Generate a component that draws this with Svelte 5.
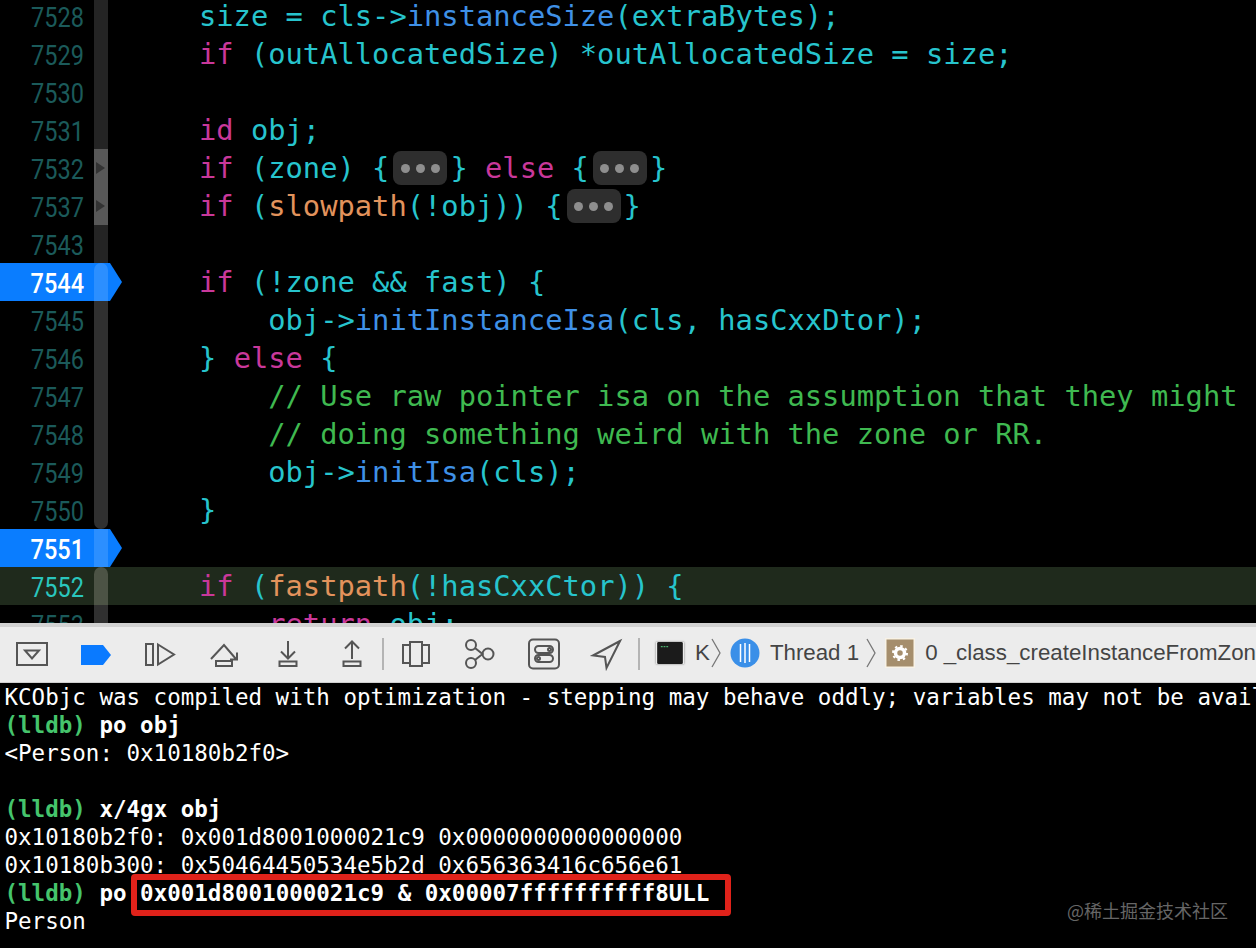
<script>
  const rows = [
    { n: 7528, stripe: 'dim', code: [['p', 'size = cls->'], ['m', 'instanceSize'], ['p', '(extraBytes);']] },
    { n: 7529, stripe: 'dim', code: [['k', 'if'], ['p', ' (outAllocatedSize) *outAllocatedSize = size;']] },
    { n: 7530, stripe: 'dim', code: [] },
    { n: 7531, stripe: 'dim', code: [['k', 'id'], ['p', ' obj;']] },
    { n: 7532, fold: 'open', code: [['k', 'if'], ['p', ' (zone) {'], ['dots', ''], ['p', '}'], ['k', ' else'], ['p', ' {'], ['dots', ''], ['p', '}']] },
    { n: 7537, fold: 'open', code: [['k', 'if'], ['p', ' ('], ['o', 'slowpath'], ['p', '(!obj)) {'], ['dots', ''], ['p', '}']] },
    { n: 7543, stripe: 'dim', code: [] },
    { n: 7544, bp: true, stripe: 'start', code: [['k', 'if'], ['p', ' (!zone && fast) {']] },
    { n: 7545, code: [['p', '    obj->'], ['m', 'initInstanceIsa'], ['p', '(cls, hasCxxDtor);']] },
    { n: 7546, code: [['p', '} '], ['k', 'else'], ['p', ' {']] },
    { n: 7547, code: [['c', '    // Use raw pointer isa on the assumption that they might']] },
    { n: 7548, code: [['c', '    // doing something weird with the zone or RR.']] },
    { n: 7549, code: [['p', '    obj->'], ['m', 'initIsa'], ['p', '(cls);']] },
    { n: 7550, stripe: 'end', code: [['p', '}']] },
    { n: 7551, bp: true, stripe: 'none', code: [] },
    { n: 7552, cur: true, stripe: 'start', code: [['k', 'if'], ['p', ' ('], ['o', 'fastpath'], ['p', '(!hasCxxCtor)) {']] },
    { n: 7553, code: [['k', '    return'], ['p', ' obj;']] }
  ];
</script>

<div class="app">
  <section class="editor">
    <div class="lines">
      {#each rows as r}
        <div class="row" class:cur={r.cur} class:bp={r.bp}>
          {#if r.bp}<span class="flag"></span>{/if}
          <span class="num">{r.n}</span>
          <span class="stripe {r.stripe ?? ''}" class:open={r.fold}>
            {#if r.fold}<i class="tri"></i>{/if}
          </span>
          <span class="code">{#each r.code as [c, t]}{#if c === 'dots'}<span class="pill"><b></b><b></b><b></b></span>{:else}<span class={c}>{t}</span>{/if}{/each}</span>
        </div>
      {/each}
    </div>
  </section>

  <nav class="toolbar">
    <div class="slot">
      <svg viewBox="0 0 40 40"><rect x="5" y="8" width="30" height="22"/><path d="M13 15.500H27L20 23.500Z"/></svg>
    </div>
    <div class="slot">
      <svg viewBox="0 0 40 40"><path class="blue" d="M5 10H27L35 20L27 30H5Z"/></svg>
    </div>
    <div class="slot">
      <svg viewBox="0 0 40 40"><rect x="6" y="9" width="7" height="21"/><path d="M18 9.500L34 19.500L18 29.500Z"/></svg>
    </div>
    <div class="slot">
      <svg viewBox="0 0 40 40"><path d="M7 24L20 10L32 24M33 17.500V24.500H26"/><rect x="12" y="26" width="16" height="5"/></svg>
    </div>
    <div class="slot">
      <svg viewBox="0 0 40 40"><path d="M20 6V23M13 16.500L20 23.500L27 16.500"/><rect x="11.500" y="26.500" width="17" height="4.500"/></svg>
    </div>
    <div class="slot sep">
      <svg viewBox="0 0 40 40"><path d="M20 7V24M13 13.500L20 6.500L27 13.500"/><rect x="11.500" y="26.500" width="17" height="4.500"/></svg>
    </div>
    <div class="slot">
      <svg viewBox="0 0 40 40"><rect x="14" y="7" width="12" height="24"/><path d="M14 10H7V28H14M26 10H33V28H26"/></svg>
    </div>
    <div class="slot">
      <svg viewBox="0 0 40 40"><circle cx="11" cy="10" r="5"/><circle cx="11" cy="28" r="5"/><circle cx="28" cy="19" r="5.500"/><path d="M15 13L22.500 19L15 25"/></svg>
    </div>
    <div class="slot">
      <svg viewBox="0 0 40 40"><rect x="5" y="4.500" width="30" height="29" rx="4"/><rect x="11" y="11" width="18" height="7" rx="3.500"/><rect x="11" y="20" width="18" height="7" rx="3.500"/><circle cx="25.500" cy="14.500" r="1.500"/><circle cx="14.500" cy="23.500" r="1.500"/></svg>
    </div>
    <div class="slot sep">
      <svg viewBox="0 0 40 40"><path d="M32 6L5 20.500L17 22L18.500 33Z"/></svg>
    </div>

    <div class="crumbs">
      <svg class="term" viewBox="0 0 28 24"><rect width="28" height="24" rx="1.500" fill="#1b1b1b"/><path d="M4 5H12" stroke="#4caf6d" stroke-width="1.500" stroke-dasharray="2 1"/></svg>
      <span class="label k-label">K</span>
      <svg class="chev" viewBox="0 0 10 30"><path d="M1 1L9 15L1 29"/></svg>
      <svg class="thread" viewBox="0 0 30 30"><circle cx="15" cy="15" r="14.500" fill="#3a8fe8"/><path d="M10.500 6V24M15 5V25M19.500 6V24" stroke="#fff" stroke-width="1.500"/></svg>
      <span class="label">Thread 1</span>
      <svg class="chev two" viewBox="0 0 10 30"><path d="M1 1L9 15L1 29"/></svg>
      <svg class="gear" viewBox="0 0 30 30"><rect x=".75" y=".75" width="28.500" height="28.500" fill="#a58e6d" stroke="#f8f2e6" stroke-width="1.500"/><circle cx="15" cy="15" r="4.500" fill="none" stroke="#fff" stroke-width="3.500"/><circle cx="15" cy="15" r="7" fill="none" stroke="#fff" stroke-width="2" stroke-dasharray="2.500 3"/></svg>
      <span class="label frame">0 _class_createInstanceFromZone</span>
    </div>
  </nav>

  <section class="console">
    <div>KCObjc was compiled with optimization - stepping may behave oddly; variables may not be available.</div>
    <div><b class="prompt">(lldb)</b> <b>po obj</b></div>
    <div>&lt;Person: 0x10180b2f0&gt;</div>
    <div>&nbsp;</div>
    <div><b class="prompt">(lldb)</b> <b>x/4gx obj</b></div>
    <div>0x10180b2f0: 0x001d8001000021c9 0x0000000000000000</div>
    <div>0x10180b300: 0x50464450534e5b2d 0x656363416c656e61</div>
    <div><b class="prompt">(lldb)</b> <b>po 0x001d8001000021c9 &amp; 0x00007ffffffffff8ULL</b></div>
    <div>Person</div>
    <span class="redbox"></span>
    <span class="mark">@稀土掘金技术社区</span>
  </section>
</div>

<style>
  :global(body) { margin: 0; background: #000; }
  .app {
    position: relative;
    width: 1256px;
    height: 948px;
    overflow: hidden;
    background: #000;
  }
  .editor { height: 623px; overflow: hidden; }
  .lines { margin-top: -3px; }
  .row {
    position: relative;
    display: flex;
    height: 38px;
    line-height: 38px;
    white-space: pre;
  }
  .row.cur { background: #1f2a1c; }
  .flag {
    position: absolute;
    left: 0;
    top: 0;
    width: 122px;
    height: 38px;
    background: #0a7dff;
    clip-path: polygon(0 0, 110px 0, 122px 19px, 110px 38px, 0 38px);
  }
  .num {
    position: relative;
    width: 84px;
    padding-right: 10px;
    text-align: right;
    font-family: "Roboto", sans-serif;
    font-size: 28px;
    line-height: 42px;
    color: #1b5a5a;
    transform: scaleX(.84);
    transform-origin: 84px 50%;
  }
  .bp .num { color: #fff; font-weight: 500; }
  .cur .num { color: #2ac6bd; }
  .stripe {
    position: relative;
    flex: none;
    width: 14px;
    background: #303030;
  }
  .stripe.dim { background: #242424; }
  .stripe.open { background: #585858; }
  .stripe.start { border-radius: 7px 7px 0 0; }
  .stripe.end { border-radius: 0 0 7px 7px; }
  .stripe.none { background: rgba(255, 255, 255, .12); }
  .bp .stripe { background: rgba(255, 255, 255, .14); }
  .cur .stripe { background: #4c5345; }
  .tri {
    position: absolute;
    left: 2px;
    top: 13px;
    border-left: 9px solid #333;
    border-top: 6px solid transparent;
    border-bottom: 6px solid transparent;
  }
  .code {
    position: relative;
    margin-left: 91px;
    font-family: "DejaVu Sans Mono", monospace;
    font-size: 28.750px;
  }
  .p { color: #27c4cd; }
  .k { color: #c9389a; }
  .m { color: #3f90e6; }
  .o { color: #e2935c; }
  .c { color: #3fb950; }
  .pill {
    display: inline-flex;
    align-items: center;
    justify-content: center;
    gap: 6px;
    width: 54px;
    height: 34px;
    margin: 2px 3px 0 4px;
    border-radius: 8px;
    background: #2e2e2e;
    vertical-align: top;
  }
  .pill b {
    width: 9px;
    height: 9px;
    border-radius: 50%;
    background: #8e8e8e;
  }

  .toolbar {
    display: flex;
    align-items: center;
    box-sizing: border-box;
    height: 60px;
    border-top: 4px solid #d2d2d2;
    border-bottom: 1px solid #cfcfcf;
    background: #ececec;
    overflow: hidden;
  }
  .slot {
    display: flex;
    flex: none;
    justify-content: center;
    box-sizing: border-box;
    width: 64px;
    height: 40px;
  }
  .slot.sep { position: relative; }
  .slot.sep::after {
    content: "";
    position: absolute;
    right: 0;
    top: 3px;
    width: 2px;
    height: 32px;
    background: #b4b4b4;
  }
  .slot svg { width: 40px; height: 40px; fill: none; stroke: #555; stroke-width: 2; }
  .slot svg .blue { fill: #0a7aff; stroke: none; }
  .crumbs {
    display: flex;
    align-items: center;
    flex: none;
    margin: -3px 0 0 16px;
    height: 30px;
  }
  .term { width: 28px; height: 22px; box-shadow: 0 0 2px #777; }
  .label {
    font-family: "Liberation Sans", sans-serif;
    font-size: 22.300px;
    color: #444;
    white-space: nowrap;
  }
  .k-label { margin-left: 11px; }
  .chev { width: 10px; height: 30px; margin-left: 1px; fill: none; stroke: #777; stroke-width: 1.300; }
  .chev.two { margin-left: 7px; }
  .thread { width: 30px; height: 30px; margin: 0 10px 0 9px; }
  .gear { width: 30px; height: 30px; margin: 0 10px 0 9px; }
  .frame { flex: none; }

  .console {
    position: relative;
    height: 265px;
    font-family: "DejaVu Sans Mono", monospace;
    font-size: 22.520px;
    line-height: 28px;
    color: #fff;
    padding-left: 4.500px;
  }
  .console div { white-space: pre; }
  .prompt { color: #45c46c; }
  .redbox {
    position: absolute;
    left: 131px;
    top: 191px;
    width: 588px;
    height: 30px;
    border: 6px solid #e0221a;
    border-radius: 4px;
  }
  .mark {
    position: absolute;
    right: 28px;
    bottom: 27px;
    font-family: "Noto Sans CJK SC", sans-serif;
    font-size: 18px;
    line-height: 22px;
    color: #666;
  }
</style>
